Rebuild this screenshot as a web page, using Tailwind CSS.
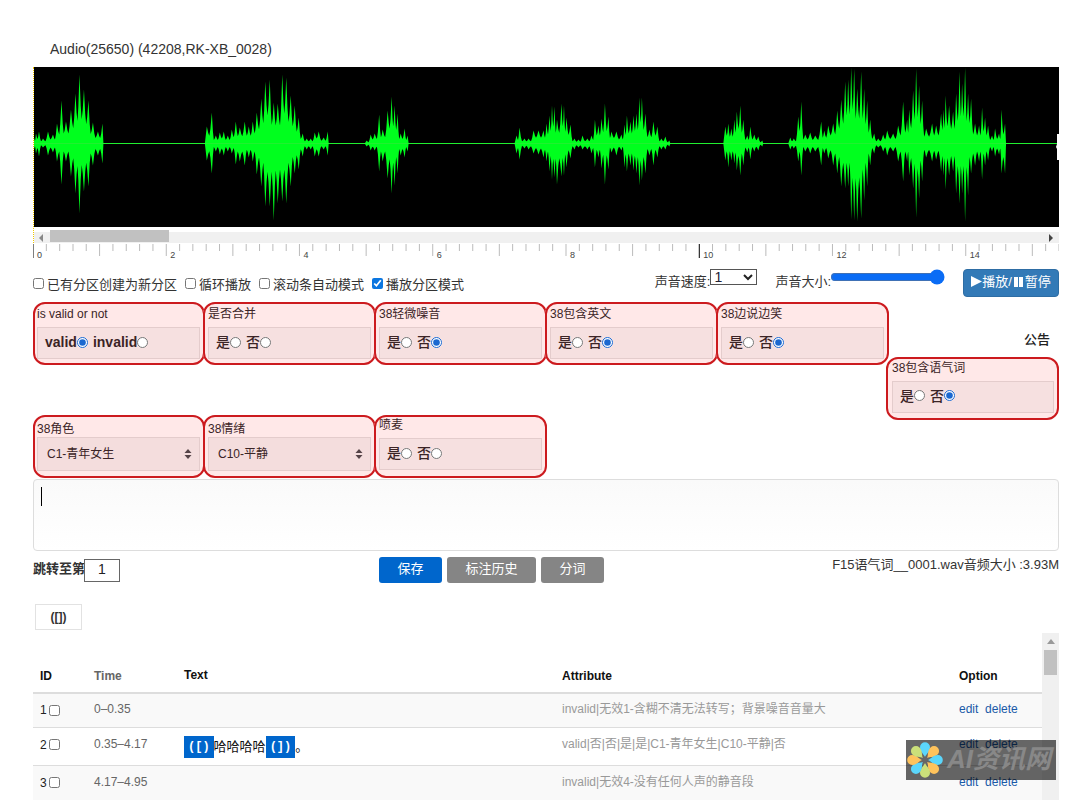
<!DOCTYPE html>
<html lang="zh-CN">
<head>
<meta charset="utf-8">
<title>Audio annotation</title>
<script src="https://cdn.jsdelivr.net/npm/@tailwindcss/browser@4"></script>
</head>
<body class="bg-white text-[#333] font-['Liberation_Sans','Noto_Sans_CJK_SC',sans-serif] text-[13px] leading-4">
<main class="relative flex h-screen flex-col overflow-hidden pr-[17px] pl-[33px]">
  <h1 class="pt-10 pb-[9px] pl-[17px] text-[14px] leading-[18px]">Audio(25650) (42208,RK-XB_0028)</h1>

  <section class="border-l border-dotted border-[#f0c800]">
    <svg class="block h-40 w-full bg-black" viewBox="33 67 1026 160" preserveAspectRatio="none" role="img" aria-label="Waveform">
      <path id="wave" fill="#00ff1e"/>
      <path d="M33 143h1026v1H33z" fill="#20f030"/>
      <path d="M1059 134h-2v10l-1 3 1 2v11h2z" fill="#fff"/>
    </svg>
    <div class="mt-[5px] flex h-[11px] items-center bg-[#f0f0f0]">
      <svg class="ml-1 h-2 w-3" viewBox="0 0 12 8"><path d="M5 0v8L1 4z" fill="#888"/></svg>
      <div class="-mt-1 h-3 w-[119px] bg-[#c1c1c1]"></div>
      <svg class="ml-auto h-2 w-3" viewBox="0 0 12 8"><path d="M2 0v8l4-4z" fill="#444"/></svg>
    </div>
  </section>
  <svg id="ruler" class="block h-[18px] w-full shrink-0 text-[#444]" aria-hidden="true"></svg>

  <div class="flex h-[41px] shrink-0 items-start pt-[8px]">
    <div class="flex gap-2 pt-2">
      <label class="flex items-start gap-[3px]"><input type="checkbox" class="mt-px h-[11px] w-[11px]"><span>已有分区创建为新分区</span></label>
      <label class="flex items-start gap-[3px]"><input type="checkbox" class="mt-px h-[11px] w-[11px]"><span>循环播放</span></label>
      <label class="flex items-start gap-[3px]"><input type="checkbox" class="mt-px h-[11px] w-[11px]"><span>滚动条自动模式</span></label>
      <label class="flex items-start gap-[3px]"><input type="checkbox" checked class="mt-px h-[11px] w-[11px] accent-[#0b76e0]"><span>播放分区模式</span></label>
    </div>
    <div class="ml-auto flex items-start">
      <label for="speed" class="pt-[5px]">声音速度:</label>
      <span class="grid w-[47px]">
        <select id="speed" class="col-start-1 row-start-1 h-4 appearance-none border border-[#555] pl-[3px] text-[14px] leading-[14px] font-medium text-[#223]"><option>1</option></select>
        <svg class="pointer-events-none col-start-1 row-start-1 mr-1 h-2 w-[10px] self-center justify-self-end" viewBox="0 0 10 8"><path d="M1 2l4 4 4-4" fill="none" stroke="#222" stroke-width="2"/></svg>
      </span>
      <label for="vol" class="ml-[18px] pt-[5px]">声音大小:</label>
      <input id="vol" type="range" value="100" class="-ml-px h-4 w-[115px] accent-[#0a6cf5]">
      <button class="ml-[18px] flex h-7 w-24 items-center justify-center rounded border border-[#2e6da4] bg-[#337ab7] pb-[3px] text-[13px] text-white">
        <svg class="h-[11px] w-[11px]" viewBox="0 0 11 11" fill="#fff"><path d="M0 0l11 5.500L0 11z"/></svg>播放/<svg class="mx-[2px] h-[10px] w-[9px]" viewBox="0 0 9 10" fill="#fff"><path d="M0 0h4v10H0zM5 0h4v10H5z"/></svg>暂停
      </button>
    </div>
  </div>

  <section class="grid shrink-0 grid-cols-6 gap-y-[50px] text-[12px] text-[#3b2426]">
    <fieldset class="-mr-px h-[63px] rounded-xl border-2 border-[#cc1a1e] bg-[#ffe8e8] pt-[2px] pr-[3px] pl-[2px]">
      <p>is valid or not</p>
      <div class="mt-[5px] flex h-8 items-center gap-[5px] border border-[#e4cccc] bg-[#f6e0e0] pb-[2px] pl-[7px] text-[14px] font-bold">
        <label class="flex items-center">valid<input type="radio" name="v" checked class="h-[11px] w-[11px] accent-[#1b68d0]"></label>
        <label class="flex items-center">invalid<input type="radio" name="v" class="h-[11px] w-[11px]"></label>
      </div>
    </fieldset>
    <fieldset class="-mx-px h-[63px] rounded-xl border-2 border-[#cc1a1e] bg-[#ffe8e8] px-[3px] pt-[2px]">
      <p>是否合并</p>
      <div class="mt-[5px] flex h-8 items-center gap-[5px] border border-[#e4cccc] bg-[#f6e0e0] pb-[2px] pl-[7px] text-[14px] font-medium">
        <label class="flex items-center">是<input type="radio" name="a" class="h-[11px] w-[11px]"></label>
        <label class="flex items-center">否<input type="radio" name="a" class="h-[11px] w-[11px]"></label>
      </div>
    </fieldset>
    <fieldset class="-mx-px h-[63px] rounded-xl border-2 border-[#cc1a1e] bg-[#ffe8e8] px-[3px] pt-[2px]">
      <p>38轻微噪音</p>
      <div class="mt-[5px] flex h-8 items-center gap-[5px] border border-[#e4cccc] bg-[#f6e0e0] pb-[2px] pl-[7px] text-[14px] font-medium">
        <label class="flex items-center">是<input type="radio" name="b" class="h-[11px] w-[11px]"></label>
        <label class="flex items-center">否<input type="radio" name="b" checked class="h-[11px] w-[11px] accent-[#1b68d0]"></label>
      </div>
    </fieldset>
    <fieldset class="-mx-px h-[63px] rounded-xl border-2 border-[#cc1a1e] bg-[#ffe8e8] px-[3px] pt-[2px]">
      <p>38包含英文</p>
      <div class="mt-[5px] flex h-8 items-center gap-[5px] border border-[#e4cccc] bg-[#f6e0e0] pb-[2px] pl-[7px] text-[14px] font-medium">
        <label class="flex items-center">是<input type="radio" name="c" class="h-[11px] w-[11px]"></label>
        <label class="flex items-center">否<input type="radio" name="c" checked class="h-[11px] w-[11px] accent-[#1b68d0]"></label>
      </div>
    </fieldset>
    <fieldset class="-mx-px h-[63px] rounded-xl border-2 border-[#cc1a1e] bg-[#ffe8e8] px-[3px] pt-[2px]">
      <p>38边说边笑</p>
      <div class="mt-[5px] flex h-8 items-center gap-[5px] border border-[#e4cccc] bg-[#f6e0e0] pb-[2px] pl-[7px] text-[14px] font-medium">
        <label class="flex items-center">是<input type="radio" name="d" class="h-[11px] w-[11px]"></label>
        <label class="flex items-center">否<input type="radio" name="d" checked class="h-[11px] w-[11px] accent-[#1b68d0]"></label>
      </div>
    </fieldset>
    <div class="col-start-6 row-span-2 row-start-1 self-start">
      <p class="pt-[30px] pr-[9px] pb-[9px] text-right text-[13px] font-medium text-[#222]">公告</p>
      <fieldset class="-ml-[2px] h-[63px] rounded-xl border-2 border-[#cc1a1e] bg-[#ffe8e8] pt-px pr-[3px] pl-1">
        <p>38包含语气词</p>
        <div class="mt-[5px] flex h-8 items-center gap-[5px] border border-[#e4cccc] bg-[#f6e0e0] pb-[3px] pl-[7px] text-[14px] font-medium">
          <label class="flex items-center">是<input type="radio" name="e" class="h-[11px] w-[11px]"></label>
          <label class="flex items-center">否<input type="radio" name="e" checked class="h-[11px] w-[11px] accent-[#1b68d0]"></label>
        </div>
      </fieldset>
    </div>
    <div class="-mr-px h-[63px] rounded-xl border-2 border-[#cc1a1e] bg-[#ffe8e8] pt-1 pr-[3px] pl-[2px]">
      <label for="role">38角色</label>
      <div class="grid">
        <select id="role" class="col-start-1 row-start-1 h-[34px] appearance-none border border-[#e4cccc] bg-[#f4dddd] pl-[9px] text-[12px]"><option>C1-青年女生</option></select>
        <svg class="pointer-events-none col-start-1 row-start-1 mr-2 h-[10px] w-2 self-center justify-self-end" viewBox="0 0 8 10" fill="#554448"><path d="M4 0l3.500 4h-7zM4 10l3.500-4h-7z"/></svg>
      </div>
    </div>
    <div class="-mx-px h-[63px] rounded-xl border-2 border-[#cc1a1e] bg-[#ffe8e8] px-[3px] pt-1">
      <label for="mood">38情绪</label>
      <div class="grid">
        <select id="mood" class="col-start-1 row-start-1 h-[34px] appearance-none border border-[#e4cccc] bg-[#f4dddd] pl-[9px] text-[12px]"><option>C10-平静</option></select>
        <svg class="pointer-events-none col-start-1 row-start-1 mr-2 h-[10px] w-2 self-center justify-self-end" viewBox="0 0 8 10" fill="#554448"><path d="M4 0l3.500 4h-7zM4 10l3.500-4h-7z"/></svg>
      </div>
    </div>
    <fieldset class="-mx-px h-[63px] rounded-xl border-2 border-[#cc1a1e] bg-[#ffe8e8] px-[3px]">
      <p>喷麦</p>
      <div class="mt-[5px] flex h-8 items-center gap-[5px] border border-[#e4cccc] bg-[#f6e0e0] pb-[2px] pl-[7px] text-[14px] font-medium">
        <label class="flex items-center">是<input type="radio" name="f" class="h-[11px] w-[11px]"></label>
        <label class="flex items-center">否<input type="radio" name="f" class="h-[11px] w-[11px]"></label>
      </div>
    </fieldset>
  </section>

  <div class="relative mt-px shrink-0">
    <textarea aria-label="Transcript" class="block h-[72px] w-full resize-none rounded-sm border border-[#ddd] bg-linear-to-b from-[#fafafa] to-white p-2 outline-none"></textarea>
    <span class="absolute top-2 left-2 h-[19px] w-px bg-black"></span>
  </div>

  <div class="grid shrink-0 grid-cols-3 items-start pt-[6px]">
    <label class="flex items-start pt-[2px] font-bold"><span class="pt-[2px]">跳转至第</span><input value="1" class="-ml-px h-[23px] w-9 border border-[#666] pb-1 text-center text-[14px] font-normal text-[#222]"></label>
    <div class="flex gap-[5px] pl-1 text-white">
      <button class="h-[26px] w-[63px] shrink-0 rounded-[3px] bg-[#0066cc] pb-[3px]">保存</button>
      <button class="h-[26px] w-[89px] shrink-0 rounded-[3px] bg-[#858585] pb-[3px]">标注历史</button>
      <button class="h-[26px] w-[63px] shrink-0 rounded-[3px] bg-[#858585] pb-[3px]">分词</button>
    </div>
    <p class="text-right text-[13px] whitespace-nowrap">F15语气词__0001.wav音频大小 :3.93M</p>
  </div>

  <button class="mt-[21px] ml-[2px] h-[26px] w-[47px] shrink-0 border border-[#e2e2e2] text-[12px] font-bold">([])</button>

  <div class="mt-[3px] flex min-h-0 flex-1 overflow-hidden text-[12px]">
    <table class="h-fit w-full table-fixed border-collapse text-left text-[#666]">
      <colgroup><col class="w-[54px]"><col class="w-[90px]"><col><col class="w-[397px]"><col class="w-[90px]"></colgroup>
      <thead>
        <tr class="h-[60px] border-b-2 border-[#ddd] text-[#111]">
          <th class="pb-2 pl-[7px] align-bottom">ID</th>
          <th class="pb-2 pl-[7px] align-bottom text-[#666]">Time</th>
          <th class="pb-[9px] pl-[7px] align-bottom">Text</th>
          <th class="pb-2 pl-[7px] align-bottom">Attribute</th>
          <th class="pb-2 pl-[7px] align-bottom">Option</th>
        </tr>
      </thead>
      <tbody class="align-top">
        <tr class="h-[34px] border-b border-[#ddd] bg-[#f9f9f9]">
          <td class="pt-2 pl-[7px] text-[#222]"><label class="flex items-center gap-[2px]">1<input type="checkbox" class="h-[11px] w-[11px]"></label></td>
          <td class="pt-[7px] pl-[7px]">0–0.35</td>
          <td></td>
          <td class="pt-[7px] pl-[7px] text-[#999]">invalid|无效1-含糊不清无法转写；背景噪音音量大</td>
          <td class="pt-[7px] pl-[7px] text-[#1a5aa8]"><a href="#">edit</a>&nbsp; <a href="#">delete</a></td>
        </tr>
        <tr class="h-[38px] border-b border-[#ddd]">
          <td class="pt-[9px] pl-[7px] text-[#222]"><label class="flex items-center gap-[2px]">2<input type="checkbox" class="h-[11px] w-[11px]"></label></td>
          <td class="pt-2 pl-[7px]">0.35–4.17</td>
          <td class="pt-2 pl-[7px]"><div class="flex items-center text-[13px] text-[#111]"><span class="bg-[#0066cc] px-1 py-[3px] font-['Liberation_Mono'] text-[12px] font-bold text-white">([)</span>哈哈哈哈<span class="bg-[#0066cc] px-1 py-[3px] font-['Liberation_Mono'] text-[12px] font-bold text-white">(])</span>。</div></td>
          <td class="pt-2 pl-[7px] text-[#999]">valid|否|否|是|是|C1-青年女生|C10-平静|否</td>
          <td class="pt-2 pl-[7px] text-[#1a5aa8]"><a href="#">edit</a>&nbsp; <a href="#">delete</a></td>
        </tr>
        <tr class="h-[38px] border-b border-[#ddd] bg-[#f9f9f9]">
          <td class="pt-[9px] pl-[7px] text-[#222]"><label class="flex items-center gap-[2px]">3<input type="checkbox" class="h-[11px] w-[11px]"></label></td>
          <td class="pt-2 pl-[7px]">4.17–4.95</td>
          <td></td>
          <td class="pt-2 pl-[7px] text-[#999]">invalid|无效4-没有任何人声的静音段</td>
          <td class="pt-2 pl-[7px] text-[#1a5aa8]"><a href="#">edit</a>&nbsp; <a href="#">delete</a></td>
        </tr>
      </tbody>
    </table>
    <div class="flex w-[17px] shrink-0 flex-col items-center bg-[#f0f0f0]">
      <svg class="my-[6px] h-[5px] w-2 shrink-0" viewBox="0 0 8 5"><path d="M4 0l4 5H0z" fill="#999"/></svg>
      <div class="h-[25px] w-[13px] bg-[#c1c1c1]"></div>
    </div>
  </div>

  <div class="absolute right-5 bottom-5 flex h-10 w-[150px] items-center overflow-hidden bg-black/60">
    <svg class="h-[38px] w-[38px] shrink-0" viewBox="-19 -19 38 38">
      <defts></defts>
      <defs><path id="petal" d="M0-3C-1-6-5-8-5-12.800A5 5 0 0 1 5-12.800C5-8 1-6 0-3Z"/></defs>
      <use href="#petal" fill="#5bd6fb"/>
      <use href="#petal" fill="#ffc35c" transform="rotate(45)"/>
      <use href="#petal" fill="#5bd6fb" transform="rotate(90)"/>
      <use href="#petal" fill="#ffc35c" transform="rotate(135)"/>
      <use href="#petal" fill="#cbe07a" transform="rotate(180)"/>
      <use href="#petal" fill="#5bd6fb" transform="rotate(225)"/>
      <use href="#petal" fill="#ffc35c" transform="rotate(270)"/>
      <use href="#petal" fill="#cbe07a" transform="rotate(315)"/>
    </svg>
    <span class="pb-[2px] pl-[3px] text-[26px] leading-9 font-bold whitespace-nowrap text-[#888] italic">AI资讯网</span>
  </div>
</main>
<script>
// Bursts of sound as x, upward peak, downward peak.
const bursts = [
  '33,6,6 35,10,10 38,12,13 42,5,4 47,12,12 52,9,9 56,20,18 60.5,43,41 65,22,18 70,34,33 74.5,50,50 78.5,69,70 83,54,48 87.5,43,43 92,21,22 97,12,12 101.5,20,20',
  '206,17,17 211,31,30 215,8,8 219,11,11 223,12,12 227,8,8 231,14,10 235,22,21 239,16,18 244,22,22 248,17,14 252,22,18 256,31,31 260.5,45,43 264.5,62,63 269,64,63 273,41,77 277,40,60 281.5,69,58 285.5,66,60 290,48,43 294,38,30 298,26,26 302,10,13 306,5,6 310,5,6 314,11,13 318,12,13 323,6,6 327,12,12',
  '366,3,3 370,9,7 374,10,7 378.5,29,28 382,14,18 387,33,35 391,47,50 394,38,42 397,30,30 400,10,12 404,15,14 407,8,8',
  '516,8,10 519,16,16 524,5,5 528,5,6 533,13,10 538,13,11 543,13,14 546,20,18 549,28,28 551.5,38,36 554,37,34 556.5,24,41 561,40,33 563.5,38,32 566,26,24 570,19,15 574,5,6 578,4,4 582,8,6 587,5,6 591,8,10 594.5,24,24 598,18,14 601,25,25 604.5,40,41 608,27,26 611,12,9 616,12,12 621,9,7 624,19,24 626.5,28,28 630,22,22 633,28,27 636,30,30 639,46,42 641.5,46,37 645,30,30 649,14,12 653,22,22 657,17,14 661,5,6 665,7,6 669,3,3',
  '725,17,17 728,20,24 731,15,17 734,24,20 736.5,32,27 740,38,32 743,24,22 747,8,9 750,17,16 754,9,8 758,7,7 762,3,3',
  '790,6,6 793.5,5,5 798,27,18 801,42,32 805,9,8 810,11,10 815,8,8 821,22,22 824,13,10 828,18,15 833,20,22 837,33,30 841,44,43 845,62,45 848,64,43 851,76,76 854,75,77 857,55,78 861,72,75 864,55,57 867,43,43 870,24,22 874,10,10 878,5,4 883,9,8 887,13,12 893,10,8 898,18,18 903,42,38 907,24,18 909,34,32 913,53,45 916,75,74 919,58,55 922,43,38 926,15,14 932,20,18 936,18,16 941,30,28 943.5,34,32 945.5,48,46 949,38,32 953,32,28 956,50,50 959.5,72,60 962,60,50 965,76,78 968,50,52 971,45,30 975,20,22 979,18,18 982,36,36 985,26,22 988,18,17 992,8,8 995,15,13 999,10,11 1001.5,34,30 1005,20,30'
];
const mid = 143.5;
// Each peak is a narrow spike that stands on the burst's solid core.
function edge(points, k, sign) {
  const out = [];
  points.forEach((p, i) => {
    const q = points[i + 1];
    out.push([p[0], mid + sign * p[k]]);
    if (!q) return;
    const gap = q[0] - p[0], low = Math.min(p[k], q[k]) * 0.45;
    out.push([p[0] + gap * 0.28, mid + sign * (low + (p[k] - low) * 0.3)]);
    out.push([p[0] + gap * 0.5, mid + sign * low]);
    out.push([p[0] + gap * 0.72, mid + sign * (low + (q[k] - low) * 0.3)]);
  });
  return out;
}
document.getElementById('wave').setAttribute('d', bursts.map(b => {
  const pts = b.split(' ').map(s => s.split(',').map(Number));
  const a = Math.max(33, pts[0][0] - 2), z = pts[pts.length - 1][0] + 1;
  return 'M' + [[a, mid], ...edge(pts, 1, -1), [z, mid], ...edge(pts, 2, 1).reverse()].map(p => p.join(' ')).join('L') + 'Z';
}).join(''));

// Time ruler: ten ticks between labels, a label every two seconds.
let marks = '';
for (let i = 0; i < 78; i++) {
  const x = (i * 100 / 77).toFixed(2) + '%';
  const major = i % 50 === 0, second = i % 5 === 0;
  marks += `<line x1="${x}" x2="${x}" y1="1" y2="${major ? 15 : second ? 13 : 8}" stroke="${major ? '#000' : '#bbb'}" stroke-width="1"/>`;
  if (i % 10 === 0) marks += `<text x="${x}" dx="4" y="15" font-size="9" fill="currentColor">${i / 5}</text>`;
}
document.getElementById('ruler').innerHTML = marks;
</script>
</body>
</html>
